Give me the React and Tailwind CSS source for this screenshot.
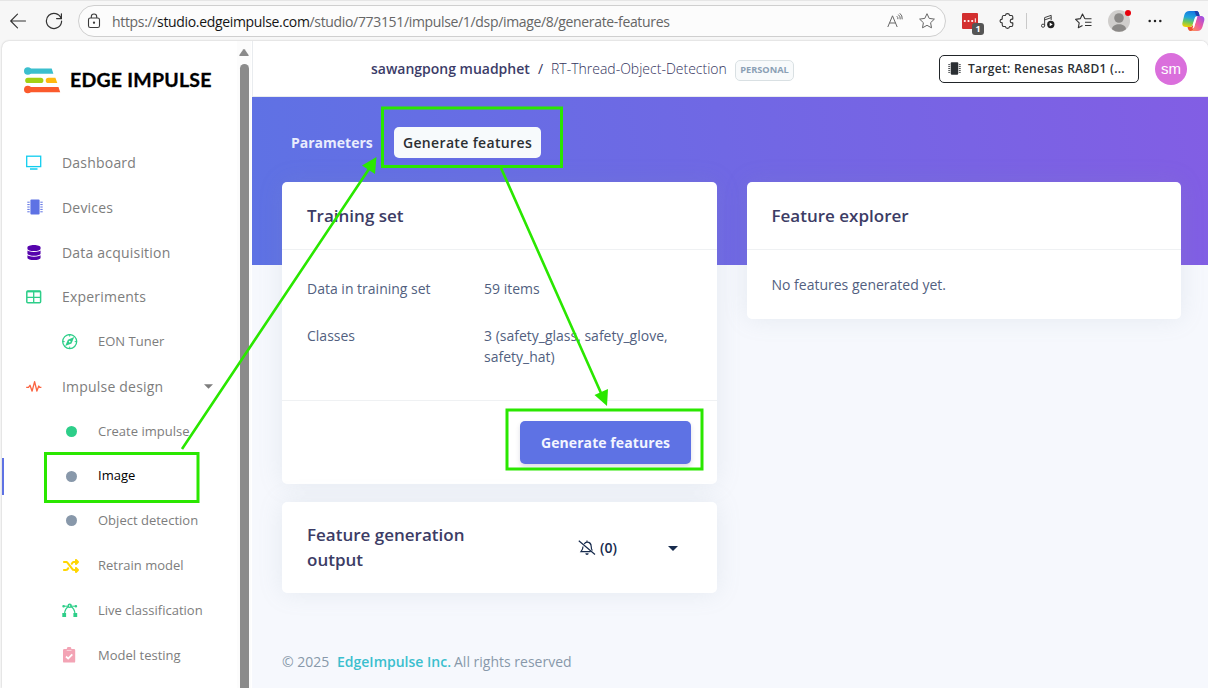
import React from "react";
import { FaDatabase, FaShuffle } from "react-icons/fa6";

function Chip({ className }) {
  return (
    <svg viewBox="0 0 16 16" className={className} fill="currentColor">
      <rect x="3.4" y="0.4" width="9.2" height="15.2" rx="1" />
      <path d="M0.3 3.2h2.4M0.3 5.6h2.4M0.3 8h2.4M0.3 10.4h2.4M0.3 12.8h2.4M13.3 3.2h2.4M13.3 5.6h2.4M13.3 8h2.4M13.3 10.4h2.4M13.3 12.8h2.4" stroke="currentColor" strokeWidth="1" />
    </svg>
  );
}

function Monitor() {
  return (
    <svg viewBox="0 0 16 16" className="h-4 w-4 text-[#11cdef]" fill="none" stroke="currentColor">
      <rect x="0.7" y="1.2" width="14" height="10.4" strokeWidth="1.3" />
      <path d="M4 14h7.500" strokeWidth="1.300" />
    </svg>
  );
}

function Grid() {
  return (
    <svg viewBox="0 0 16 16" className="h-4 w-4 text-[#2dce89]" fill="none" stroke="currentColor">
      <rect x="0.8" y="2" width="13.8" height="11.8" rx="1" strokeWidth="1.5" />
      <path d="M1 2.6h13.6" strokeWidth="1.6" />
      <path d="M1 8.3h13.8M7.7 3v11" strokeWidth="1.3" />
    </svg>
  );
}

function Compass() {
  return (
    <svg viewBox="0 0 16 16" className="h-4 w-4 text-[#2dce89]" fill="none" stroke="currentColor">
      <circle cx="7.700" cy="7.600" r="7" strokeWidth="1.3" />
      <path d="M7.700.6v2M7.700 12.600v2M.7 7.600h2M12.700 7.600h2" strokeWidth="1" />
      <path d="M12.200 3.100 9.500 9.400 3.200 12.100 5.900 5.800z" fill="currentColor" stroke="none" />
      <circle cx="7.700" cy="7.600" r=".9" fill="white" stroke="none" />
    </svg>
  );
}

function Pulse() {
  return (
    <svg viewBox="0 0 16 16" className="h-4 w-4 text-[#fb6340]" fill="none" stroke="currentColor" strokeWidth="1.3" strokeLinejoin="round">
      <path d="M0.200 8.400h2.300L4 6.300l2.100 5.900L8.600 2.600l2.300 9.500 1.900-5.100 .9 1.400h1.700" />
    </svg>
  );
}

function Bezier() {
  return (
    <svg viewBox="0 0 17 15" className="h-[15px] w-[17px] text-[#2dce89]" fill="none" stroke="currentColor" strokeWidth="1.200">
      <path d="M2.500 11C2.800 7.300 4.300 4.600 7 3.400M13 11C12.700 7.300 11.200 4.600 8.500 3.400" />
      <path d="M1.500 3.200h4.600l1.600-1.700 1.600 1.700h4.700" strokeWidth="1" />
      <circle cx="7.700" cy="2.700" r="1.600" />
      <circle cx="1.600" cy="3.300" r=".7" />
      <circle cx="13.900" cy="3.300" r=".7" />
      <path d="M.3 10h3.800v4H.3zM11.400 10h3.800v4h-3.800z" fill="currentColor" stroke="none" />
    </svg>
  );
}

function Clipboard() {
  return (
    <svg viewBox="0 0 16 16" className="h-4 w-4 text-[#f3a4b5]">
      <path d="M2.200 2h2.600a2.300 2.300 0 0 1 4.600 0H12a1.200 1.200 0 0 1 1.200 1.200v11.200a1.200 1.200 0 0 1-1.200 1.200H2.200A1.200 1.200 0 0 1 1 14.400V3.200A1.200 1.200 0 0 1 2.200 2z" fill="currentColor" />
      <path d="M4.700 3.500h4.800" stroke="white" strokeWidth=".5" />
      <path d="m4 9.500 2.200 2.100L10.300 7.400" fill="none" stroke="white" strokeWidth="1.800" />
    </svg>
  );
}

function Dot({ className }) {
  return <span className={"ml-[4px] block h-[11px] w-[11px] rounded-full " + className} />;
}

function Caret({ className }) {
  return (
    <svg viewBox="0 0 10 5" className={className} fill="currentColor">
      <path d="M0 0h10L5 5z" />
    </svg>
  );
}

const items = [
  { label: "Dashboard", icon: <Monitor /> },
  { label: "Devices", icon: <Chip className="ml-px h-4 w-4 text-[#5e72e4]" /> },
  { label: "Data acquisition", icon: <FaDatabase className="ml-px h-[15px] w-[14px] text-[#5603ad]" /> },
  { label: "Experiments", icon: <Grid /> },
  { label: "EON Tuner", icon: <Compass />, sub: true },
  { label: "Impulse design", icon: <Pulse />, caret: true },
  { label: "Create impulse", icon: <Dot className="bg-[#2dce89]" />, sub: true },
  { label: "Image", icon: <Dot className="bg-[#8898aa]" />, sub: true, active: true },
  { label: "Object detection", icon: <Dot className="bg-[#8898aa]" />, sub: true },
  { label: "Retrain model", icon: <FaShuffle className="ml-px h-[16px] w-[16px] text-[#ffd600]" />, sub: true },
  { label: "Live classification", icon: <Bezier />, sub: true },
  { label: "Model testing", icon: <Clipboard />, sub: true },
];

function NavItem({ item }) {
  return (
    <li className="flex h-[44.8px] shrink-0 items-center">
      <span className={"h-[37px] w-[2px] shrink-0 " + (item.active ? "bg-[#5e72e4]" : "")} />
      <span className={"flex w-9 shrink-0 items-center " + (item.sub ? "ml-[58px]" : "ml-[22px]")}>{item.icon}</span>
      <span
        className={
          "whitespace-nowrap " +
          (item.sub ? "text-[13px] tracking-[0.01px]" : "text-[14px] tracking-[0.2px]") +
          (item.active ? " text-black" : " text-[#7d7d7d]")
        }
      >
        {item.label}
      </span>
      {item.caret && <Caret className="mr-[24px] ml-auto h-[5px] w-[9px] text-[#7d7d7d]" />}
    </li>
  );
}

function Logo() {
  return (
    <svg viewBox="0 0 37 27" className="h-[27px] w-[37px] shrink-0">
      <path d="M4 1.600h23.700l1.700 5.200H4z" fill="#3bbfce" />
      <circle cx="3.800" cy="4" r="3.800" fill="#3bbfce" />
      <rect x="1.200" y="10.700" width="18.200" height="5.400" rx="2.700" fill="#a3d013" />
      <path d="M24.400 10.700h7l1.900 5.400h-8.900a2.700 2.700 0 0 1 0-5.400z" fill="#ffb90f" />
      <path d="M4 20h30.500l1.700 5.200H4z" fill="#fb5a2c" />
      <circle cx="3.800" cy="22.500" r="3.800" fill="#fb5a2c" />
    </svg>
  );
}

function BrowserBar() {
  return (
    <header className="flex h-[41px] shrink-0 items-center border-t border-[#e6e6e6] bg-[#f7f7f7]">
      <svg viewBox="0 0 16 16" className="ml-[10px] h-4 w-4 shrink-0" fill="none" stroke="#333" strokeWidth="1.100" strokeLinecap="round" strokeLinejoin="round">
        <path d="M15.500 8H.8M7.500 1.200.7 8l6.800 6.800" />
      </svg>
      <svg viewBox="0 0 18 18" className="ml-[19px] h-[18px] w-[18px] shrink-0" fill="none" stroke="#333" strokeWidth="1.200" strokeLinecap="round">
        <path d="M16.200 6.500A7.600 7.600 0 1 0 16.600 9M16.400 1.800v4.800h-4.800" />
      </svg>
      <div className="ml-[15px] flex h-8 w-[868px] shrink-0 items-center rounded-full border border-[#cfcfcf] bg-[#fcfcfc]">
        <svg viewBox="0 0 14 16" className="ml-[8px] h-4 w-[14px] shrink-0" fill="none" stroke="#3a3a3a" strokeWidth="1.100">
          <rect x="1.500" y="5" width="11" height="9.500" rx="1.800" />
          <path d="M4.300 5V3.700a2.700 2.700 0 0 1 5.400 0V5" />
          <circle cx="7" cy="9.700" r=".6" fill="#3a3a3a" />
        </svg>
        <span className="ml-[11px] w-[560px] whitespace-nowrap text-[14px] tracking-[-0.335px] text-[#666]">
          https://<span className="text-[#151515]">studio.edgeimpulse.com</span>/studio/773151/impulse/1/dsp/image/8/generate-features
        </span>
        <svg viewBox="0 0 16 16" className="mr-[16px] ml-auto h-4 w-4 shrink-0" fill="none" stroke="#666" strokeWidth="1">
          <path d="M.8 14 5.500 2.800 10.200 14M2.500 10h6M9.800 3.200q1.400 1.200 1.100 3M11.300 1.600q2.300 1.800 1.900 4.800M12.800.3q2.800 2.200 2.400 6" />
        </svg>
        <svg viewBox="0 0 16 16" className="mr-[10px] h-4 w-4 shrink-0" fill="none" stroke="#666" strokeWidth="1" strokeLinejoin="round">
          <path d="m8 .7 2.200 4.700 5.200.7-3.800 3.600.9 5.100L8 12.300l-4.500 2.500.9-5.100L.6 6.100l5.200-.7z" />
        </svg>
      </div>
      <div className="relative ml-[16px] h-[16px] w-[16px] shrink-0 rounded-[1px] bg-[#d32f2f]">
        <svg viewBox="0 0 16 16" className="h-[16px] w-[16px]" fill="white">
          <circle cx="2.800" cy="8" r="1.100" /><circle cx="6.500" cy="8" r="1.100" /><circle cx="10.200" cy="8" r="1.100" />
          <rect x="12.800" y="5.300" width="1" height="4" />
        </svg>
        <span className="absolute top-[10px] left-[10px] flex h-3 w-3 items-center justify-center rounded-[3px] bg-[#555] text-[9px] font-bold text-white">1</span>
      </div>
      <svg viewBox="0 0 16 16" className="ml-[21px] h-4 w-4 shrink-0" fill="none" stroke="#333" strokeWidth="1.100" strokeLinejoin="round">
        <path d="M3.200 4.500q0-2 1.300-2h1.900q.2-1.900 2.100-1.900t2.100 1.900h1.900q1.300 0 1.300 1.500v2.100h-1q-1.600.2-1.600 1.900t1.600 1.900h1v2.100q0 1.500-1.300 1.500h-1.900q-.2 1.900-2.100 1.900t-2.100-1.900H4.500q-1.300 0-1.300-2V9.900Q1 9.700 1 8t2.200-1.900z" />
      </svg>
      <span className="ml-[11px] h-4 w-px bg-[#c9c9c9]" />
      <svg viewBox="0 0 15 15" className="ml-[14px] h-[15px] w-[14px] shrink-0" fill="none" stroke="#333" strokeWidth="1">
        <circle cx="2.200" cy="12" r="1.700" />
        <path d="M3.900 12V3.300l7-2.400v5M3.900 5.800l7-2.400" />
        <circle cx="10.500" cy="10.700" r="3.900" fill="#222" stroke="none" />
        <path d="m9.300 8.700 3.200 2-3.200 2z" fill="white" stroke="none" />
      </svg>
      <svg viewBox="0 0 17 16" className="ml-[20px] h-4 w-[17px] shrink-0" fill="none" stroke="#333" strokeWidth="1.100" strokeLinejoin="round">
        <path d="M9.900 5.800 7.500 1 5.400 5.600l-4.800.8L4.200 9.800 3.300 14.800 7.500 12.500M9.900 5.800h6.600M10 9.200h6.500M10 12.500h6.500" />
      </svg>
      <div className="relative ml-[16px] h-[22px] w-[22px] shrink-0">
        <svg viewBox="0 0 22 22" className="h-[22px] w-[22px]">
          <circle cx="11" cy="11" r="11" fill="#d0cecc" />
          <circle cx="11" cy="8" r="4.800" fill="#8b8987" />
          <path d="M4 19.200c0-6.500 14-6.500 14 0a11 11 0 0 1-14 0z" fill="#8b8987" />
        </svg>
        <span className="absolute top-0 left-[17px] h-[6px] w-[6px] rounded-full bg-[#e8000b]" />
      </div>
      <svg viewBox="0 0 14 4" className="ml-[18px] h-1 w-[14px] shrink-0" fill="#222">
        <circle cx="1.700" cy="2" r="1.250" /><circle cx="7" cy="2" r="1.250" /><circle cx="12.300" cy="2" r="1.250" />
      </svg>
      <svg viewBox="0 0 23 22" className="ml-[20px] h-[22px] w-[23px] shrink-0">
        <defs>
          <linearGradient id="cpA" x1=".5" y1="0" x2=".3" y2="1">
            <stop offset="0" stopColor="#1478e0" /><stop offset=".4" stopColor="#20a5dc" /><stop offset=".7" stopColor="#6fc85a" /><stop offset="1" stopColor="#f3d000" />
          </linearGradient>
          <linearGradient id="cpB" x1="1" y1="0" x2="0" y2="1">
            <stop offset="0" stopColor="#8f4cf0" /><stop offset=".5" stopColor="#ee5aa0" /><stop offset="1" stopColor="#ff9a4c" />
          </linearGradient>
        </defs>
        <path d="M14 6h4.500c3 0 4.500 1.800 3.700 4.700l-1.800 6.300c-.9 2.900-2.400 4-5 4H8.700c1.700 0 2.600-1 3.200-3l2.200-8c.6-2 .7-4-.1-4z" fill="url(#cpB)" />
        <path d="M7.500 1h7c1.700 0 2.300 1.500 2.800 3.500L17.600 6h-2c-1.900 0-2.700 1.100-3.200 3l-1.700 5.500c-.5 1.700-1.500 2.500-3 2.500H4c-3 0-4.200-1.600-3.500-4.500L2.300 5C3 2.200 4.800 1 7.500 1z" fill="url(#cpA)" />
        <path d="M12 1h2.500c1.700 0 2.300 1.500 2.800 3.500l.3 1.500h-2.400C13.200 6 13.600 1 12 1z" fill="#1d3fae" />
        <path d="M8.700 21C6.500 21 6 19 5.500 17h2.700c1.300 0 2-.6 2.500-2l1.200 3c-.6 2-1.500 3-3.200 3z" fill="#f0532d" />
        <path d="M13.300 7.500q1-1.500 2.300-1.500L12 17.500q-.6 1.200-1.800.8 1-1 1.300-3.300l-.7.100z" fill="white" />
      </svg>
    </header>
  );
}

const cardShadow = "shadow-[0_0_24px_rgba(136,152,170,0.15)]";

export default function App() {
  return (
    <div className="relative flex h-[688px] w-[1208px] flex-col overflow-hidden bg-[#f7f7f7] font-['Open_Sans','Noto_Sans',sans-serif]">
      <BrowserBar />
      <div className="ml-[2px] flex min-h-0 flex-1 overflow-hidden rounded-t-[7px] bg-white shadow-[0_0_2px_rgba(0,0,0,0.25)]">
        <nav className="w-[235px] shrink-0">
          <div className="flex h-[99.2px] items-start pt-[26px] pl-[22px]">
            <Logo />
            <span className="ml-[9px] whitespace-nowrap font-['Lato','Open_Sans',sans-serif] text-[19.500px] leading-[26px] font-bold tracking-[0.220px] text-black [-webkit-text-stroke:0.3px_black]">EDGE IMPULSE</span>
          </div>
          <ul className="flex flex-col">
            {items.map((it) => <NavItem key={it.label} item={it} />)}
          </ul>
        </nav>
        <div className="mr-px flex w-[14px] shrink-0 flex-col items-center bg-[#fcfcfc] pt-[8px]">
          <svg viewBox="0 0 10 7" className="h-[7px] w-[10px] shrink-0" fill="#8b8b8b"><path d="M4.200.5q.8-.8 1.600 0L9.600 6q.3 1-.6 1H1q-.9 0-.6-1z" /></svg>
          <div className="mt-[8px] w-[9px] flex-1 rounded-t-full bg-[#8b8b8b]" />
        </div>
        <main className="flex min-w-0 flex-1 flex-col bg-[#f6f8fd]">
          <div className="flex h-14 shrink-0 items-center border-b border-l border-[#e9ecef] bg-white pl-[118px] text-[14px] text-[#32325d]">
            <span className="w-[160px] whitespace-nowrap font-semibold tracking-[-0.01px] text-[#3c3c68]">sawangpong muadphet</span>
            <span className="ml-[7px] w-[13px]">/</span>
            <span className="w-[176px] whitespace-nowrap font-light">RT-Thread-Object-Detection</span>
            <span className="mt-[3px] ml-[8px] flex h-[21px] w-[59px] items-center justify-center rounded-[5px] border border-[#d9e0e3] bg-[#f8fafb] text-[9.240px] font-bold text-[#8ba0b5]">PERSONAL</span>
            <span className="ml-[145px] flex h-7 w-[200px] items-center rounded-[5px] border border-[#212529] pl-[8px] text-[12px] text-[#2b2f33]">
              <Chip className="h-[13px] w-[13px] shrink-0" />
              <span className="ml-[7px] whitespace-nowrap font-semibold tracking-[0.290px]">Target: Renesas RA8D1 (...</span>
            </span>
            <span className="ml-[16px] flex h-8 w-8 items-center justify-center rounded-full bg-[#da6fdc] pt-px font-['Liberation_Sans',sans-serif] text-[15px] text-white">sm</span>
          </div>
          <div className="h-[168px] shrink-0 bg-linear-[80deg,#5e72e4,#825ee4] pt-[30px] pl-[39px]">
            <div className="flex h-[31px] items-center text-[14px] font-semibold">
              <span className="w-[103px] whitespace-nowrap font-bold text-[#e9ecfd]">Parameters</span>
              <span className="flex h-[31px] w-[147px] items-center justify-center rounded-[5px] bg-[#f7fafc] whitespace-nowrap tracking-[0.350px] text-[#2b2f33]">Generate features</span>
            </div>
          </div>
          <div className="z-10 -mt-[83px] flex items-start gap-[30px] pl-[30px]">
            <div className="flex w-[435px] flex-col gap-[17px]">
              <section className={"flex h-[302px] flex-col rounded-[5px] bg-white text-[14px] text-[#525f7f] " + cardShadow}>
                <h2 className="flex h-[68px] shrink-0 items-center border-b border-[#eff1f3] pl-[25px] text-[17px] font-semibold text-[#3c3c65]">Training set</h2>
                <dl className="grid h-[150px] shrink-0 grid-cols-[177px_1fr] content-start gap-y-[26px] pt-[28px] pl-[25px] leading-[21px]">
                  <dt>Data in training set</dt>
                  <dd>59 items</dd>
                  <dt>Classes</dt>
                  <dd className="whitespace-nowrap">3 (safety_glass, safety_glove,<br />safety_hat)</dd>
                </dl>
                <div className="flex flex-1 justify-end border-t border-[#eff1f3] pt-[20px] pr-[26px]">
                  <button className="h-[43px] w-[171px] rounded-[5px] bg-[#5e72e4] text-[14px] font-bold tracking-[0.080px] whitespace-nowrap text-[#f3f5ff] shadow-[0_3px_5px_rgba(50,50,93,0.16)]">Generate features</button>
                </div>
              </section>
              <section className={"mt-px flex h-[91px] items-center rounded-[5px] bg-white pl-[25px] " + cardShadow}>
                <h2 className="w-[271px] pb-[2px] text-[17px] leading-[25px] font-semibold text-[#3c3c65]">Feature generation<br />output</h2>
                <svg viewBox="0 0 18 16" className="h-4 w-[18px] shrink-0" fill="none" stroke="#172b4d" strokeWidth="1.200">
                  <path d="M.8.8 17 14.500M6.200 4Q7.300 2.200 9 2.200c2.700 0 4.200 2 4.200 4.300 0 1.800.4 3 1.200 4M5 6.500c0 2.600-.8 3.700-2 5.200h9.500M9 .6v1.600" />
                  <path d="M7.300 13.300h3.400a1.700 1.700 0 0 1-3.400 0z" fill="#172b4d" stroke="none" />
                </svg>
                <span className="ml-[4px] w-[18px] text-[14px] font-semibold whitespace-nowrap text-[#172b4d]">(0)</span>
                <Caret className="mt-px ml-[50px] h-[5px] w-[10px] text-[#172b4d]" />
              </section>
            </div>
            <section className={"h-[137px] w-[434px] rounded-[5px] bg-white " + cardShadow}>
              <h2 className="flex h-[68px] items-center border-b border-[#eff1f3] pl-[24.500px] text-[17px] font-semibold text-[#3c3c65]">Feature explorer</h2>
              <p className="pt-[24px] pl-[24.500px] text-[14px] leading-[21px] text-[#525f7f]">No features generated yet.</p>
            </section>
          </div>
          <footer className="mt-[58px] flex pl-[30px] text-[14px] leading-[21px] whitespace-nowrap text-[#8898aa]">
            <span className="w-[55px]">© 2025</span>
            <span className="w-[117px] font-semibold text-[#3bbfce]">EdgeImpulse Inc.</span>
            <span>All rights reserved</span>
          </footer>
        </main>
      </div>
      <svg viewBox="0 0 1208 688" className="pointer-events-none absolute inset-0 z-20 h-[688px] w-[1208px]" fill="none" stroke="#2ae700" strokeWidth="3">
        <rect x="382.500" y="108" width="179" height="58.500" />
        <rect x="507" y="410" width="195" height="59" />
        <rect x="45.500" y="453.500" width="152.500" height="48" />
        <path d="M182 449 369 169M501 168 601 393" strokeWidth="2.600" />
        <path d="M376.500 157 375 174 362 165.500zM607 406 594.500 395 608 389z" fill="#2ae700" stroke="none" />
      </svg>
    </div>
  );
}
